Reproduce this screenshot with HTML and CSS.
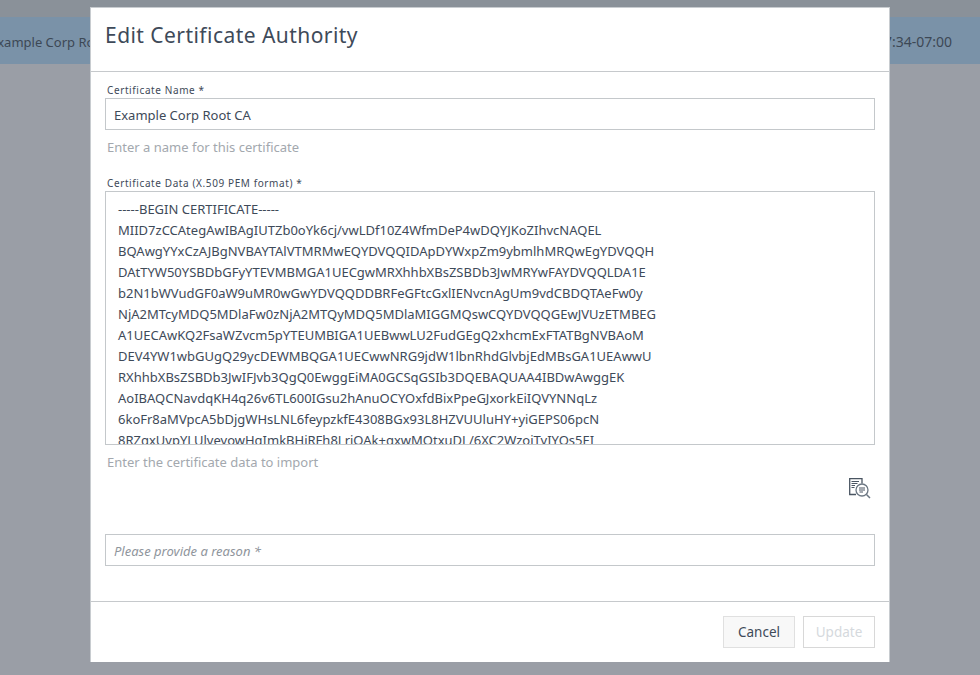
FILE: index.html
```html
<!DOCTYPE html>
<html lang="en">
<head>
    <meta charset="UTF-8">
    <title>Edit Certificate Authority</title>
    <link rel="stylesheet" href="styles.css">
</head>
<body>
    <div class="list-row">
        <span class="row-name">Example Corp Root CA</span>
        <span class="row-date">2024-06-14T10:17:34-07:00</span>
    </div>

    <div class="modal">
        <h2 class="modal-title">Edit Certificate Authority</h2>
        <div class="modal-body">
            <label class="field-label">Certificate Name *</label>
            <input class="text-input" type="text" value="Example Corp Root CA">
            <div class="help-text">Enter a name for this certificate</div>

            <label class="field-label label-data">Certificate Data (X.509 PEM format) *</label>
            <textarea class="cert-data" readonly>-----BEGIN CERTIFICATE-----
MIID7zCCAtegAwIBAgIUTZb0oYk6cj/vwLDf10Z4WfmDeP4wDQYJKoZIhvcNAQEL
BQAwgYYxCzAJBgNVBAYTAlVTMRMwEQYDVQQIDApDYWxpZm9ybmlhMRQwEgYDVQQH
DAtTYW50YSBDbGFyYTEVMBMGA1UECgwMRXhhbXBsZSBDb3JwMRYwFAYDVQQLDA1E
b2N1bWVudGF0aW9uMR0wGwYDVQQDDBRFeGFtcGxlIENvcnAgUm9vdCBDQTAeFw0y
NjA2MTcyMDQ5MDlaFw0zNjA2MTQyMDQ5MDlaMIGGMQswCQYDVQQGEwJVUzETMBEG
A1UECAwKQ2FsaWZvcm5pYTEUMBIGA1UEBwwLU2FudGEgQ2xhcmExFTATBgNVBAoM
DEV4YW1wbGUgQ29ycDEWMBQGA1UECwwNRG9jdW1lbnRhdGlvbjEdMBsGA1UEAwwU
RXhhbXBsZSBDb3JwIFJvb3QgQ0EwggEiMA0GCSqGSIb3DQEBAQUAA4IBDwAwggEK
AoIBAQCNavdqKH4q26v6TL600IGsu2hAnuOCYOxfdBixPpeGJxorkEiIQVYNNqLz
6koFr8aMVpcA5bDjgWHsLNL6feypzkfE4308BGx93L8HZVUUluHY+yiGEPS06pcN
8RZgxUvpYLUlveyowHgImkBHiRFh8LrjOAk+gxwMOtxuDL/6XC2WzojTyIYOs5EI</textarea>
            <div class="help-text help-data">Enter the certificate data to import</div>

            <div class="tool-row">
                <svg class="inspect-icon" width="22" height="22" viewBox="0 0 22 22" fill="none" stroke="#4a5562">
                    <path d="M7 16.5H0.7V0.7H13V5.5" stroke-width="1.3"/>
                    <path d="M2.5 3.5H10M2.5 5.5H8.5M2.5 7.5H6M2.5 9.5H5.5" stroke-width="1"/>
                    <circle cx="13" cy="12" r="6" stroke="#6b7682" stroke-width="1.3"/>
                    <path d="M10 10H16M10 12H16M10.5 14H14" stroke-width="1"/>
                    <path d="M17.5 16.5L21 20" stroke="#6b7682" stroke-width="1.5"/>
                </svg>
            </div>

            <input class="text-input reason-input" type="text" placeholder="Please provide a reason *">
        </div>
        <div class="modal-footer">
            <button class="btn btn-cancel">Cancel</button>
            <button class="btn btn-update" disabled>Update</button>
        </div>
    </div>
</body>
</html>
```

FILE: styles.css
```css
html, body { height: 100%; }
body {
    margin: 0;
    overflow: hidden;
    background-color: #9a9ea6;
    font-family: "Noto Sans", sans-serif;
    color: #3e4a59;
    border-top: 17px solid #8a9199;
    box-sizing: border-box;
}

.list-row {
    display: flex;
    justify-content: space-between;
    align-items: center;
    height: 47px;
    padding: 2px 28px 0 0;
    box-sizing: border-box;
    background-color: #7a92a8;
    color: #3d4855;
    font-size: 13px;
    white-space: nowrap;
}
.row-name { margin-left: -10px; }
.row-date { font-size: 14px; }

.modal {
    position: fixed;
    top: 7px;
    left: 90px;
    width: 798px;
    height: 654px;
    display: flex;
    flex-direction: column;
    background-color: #fff;
    border: 1px solid #c8ccd0;
    border-bottom: 0;
}

.modal-title {
    margin: 0;
    height: 64px;
    padding-left: 14px;
    font-size: 21px;
    font-weight: 400;
    line-height: 54px;
    letter-spacing: 0.45px;
    border-bottom: 1px solid #c6c9cc;
    box-sizing: border-box;
}

.modal-body {
    flex: 1;
    padding: 9px 14px 0 14px;
    border-bottom: 1px solid #c6c9cc;
}

.field-label {
    display: block;
    padding: 1px 0 0 2px;
    margin-bottom: -1px;
    font-size: 10px;
    line-height: 17px;
    letter-spacing: 0.6px;
}
.label-data { margin-top: 16px; }

.text-input {
    display: block;
    width: 100%;
    height: 32px;
    padding: 2px 8px 0;
    border: 1px solid #c4c8cb;
    box-sizing: border-box;
    outline: none;
    font-family: inherit;
    font-size: 13px;
    color: #3e4a59;
}
.text-input::placeholder { color: #8f959c; font-style: italic; opacity: 1; }
.reason-input { margin-top: 34px; }

.help-text {
    margin-top: 6px;
    padding-left: 2px;
    font-size: 13px;
    line-height: 22px;
    color: #a3a8ae;
}

.cert-data {
    display: block;
    width: 100%;
    height: 254px;
    padding: 7px 12px 0;
    border: 1px solid #c4c8cb;
    box-sizing: border-box;
    outline: none;
    resize: none;
    overflow: hidden;
    white-space: pre;
    font-family: inherit;
    font-size: 13px;
    line-height: 21px;
    color: #3e4a59;
}

.tool-row {
    display: flex;
    justify-content: flex-end;
    margin-top: 5px;
    padding-right: 4px;
}

.modal-footer {
    display: flex;
    justify-content: flex-end;
    gap: 8px;
    height: 60px;
    padding: 14px 14px 0 0;
    box-sizing: border-box;
}

.btn {
    width: 72px;
    height: 32px;
    padding: 0;
    font-family: inherit;
    font-size: 13.5px;
}
.btn-cancel { background-color: #f8f8f8; border: 1px solid #e0e0e0; color: #3e4a59; }
.btn-update { background-color: #fff; border: 1px solid #d8d8d8; color: #d5d9dd; }
```
